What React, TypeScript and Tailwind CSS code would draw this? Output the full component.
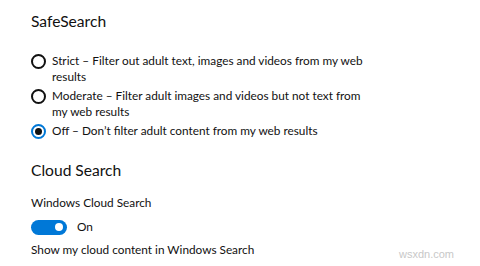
import React from 'react';

function Radio({ checked }: { checked?: boolean }) {
  return (
    <span
      className={
        'mt-[1px] flex h-[15px] w-[15px] shrink-0 items-center justify-center rounded-full border-2 ' +
        (checked ? 'border-[#0078d7]' : 'border-[#111]')
      }
    >
      {checked && <span className="h-[7px] w-[7px] rounded-full bg-[#111]" />}
    </span>
  );
}

function Option({ lines, checked }: { lines: string[]; checked?: boolean }) {
  return (
    <div className="flex items-start gap-[6px]">
      <Radio checked={checked} />
      <div className="whitespace-nowrap text-[11.8px] leading-[16px] text-[#111]">
        {lines.map((l, i) => (
          <div key={i}>{l}</div>
        ))}
      </div>
    </div>
  );
}

export default function App() {
  return (
    <div
      className="relative h-[266px] w-[480px] overflow-hidden bg-white pl-[31px] pt-[11px]"
      style={{ fontFamily: 'Lato, "Noto Sans", sans-serif' }}
    >
      <h2 className="text-[15.6px] leading-[20px] text-[#111]">SafeSearch</h2>

      <div className="mt-[22px] flex flex-col gap-[3px]">
        <Option lines={['Strict – Filter out adult text, images and videos from my web', 'results']} />
        <Option lines={['Moderate – Filter adult images and videos but not text from', 'my web results']} />
        <Option lines={['Off – Don’t filter adult content from my web results']} checked />
      </div>

      <h2 className="mt-[21px] text-[15.6px] leading-[20px] text-[#111]">Cloud Search</h2>

      <div className="mt-[15px] text-[11.8px] leading-[16px] text-[#111]">Windows Cloud Search</div>

      <div className="mt-[8px] flex h-[16px] items-center gap-[10px]">
        <span className="flex h-[15px] w-[36px] items-center justify-end rounded-full bg-[#0078d7] pr-[4px]">
          <span className="h-[8px] w-[8px] rounded-full bg-white" />
        </span>
        <span className="text-[11.8px] leading-[16px] text-[#111]">On</span>
      </div>

      <div className="mt-[7px] text-[11.8px] leading-[16px] text-[#111]">Show my cloud content in Windows Search</div>

      <div
        className="absolute bottom-[4px] right-[26px] text-[11px] text-[#c8c8c8]"
        style={{ fontFamily: '"Liberation Sans", sans-serif' }}
      >
        wsxdn.com
      </div>
    </div>
  );
}
